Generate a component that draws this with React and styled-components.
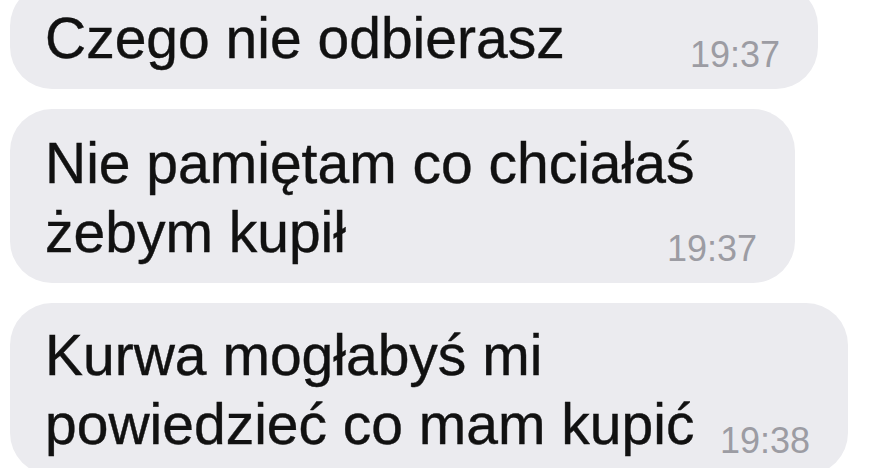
import React from "react";
import styled, { createGlobalStyle } from "styled-components";

const GlobalStyle = createGlobalStyle`
  html, body {
    margin: 0;
    padding: 0;
    background: #ffffff;
    overflow: hidden;
  }
`;

const Thread = styled.div`
  display: flex;
  flex-direction: column;
  align-items: flex-start;
  gap: 20px;
  margin-top: -16px;
  padding-left: 10px;
  font-family: "Liberation Sans", Arial, sans-serif;
`;

const Bubble = styled.div`
  box-sizing: border-box;
  width: ${(p) => p.width}px;
  padding: ${(p) => p.top}px 38px 16px 35px;
  background: #ebebef;
  border-radius: 42px;
  color: #111111;
`;

const Line = styled.div`
  font-size: 57px;
  line-height: 69px;
  white-space: nowrap;
  -webkit-text-stroke: 0.4px #111111;
`;

const LastLine = styled.div`
  display: flex;
  justify-content: space-between;
  align-items: flex-end;
`;

const Time = styled.span`
  font-size: 36px;
  line-height: 36px;
  color: #9c9ca3;
  white-space: nowrap;
`;

const messages = [
  { lines: ["Czego nie odbierasz"], time: "19:37", width: 808, top: 20 },
  {
    lines: ["Nie pamiętam co chciałaś", "żebym kupił"],
    time: "19:37",
    width: 785,
    top: 20,
  },
  {
    lines: ["Kurwa mogłabyś mi", "powiedzieć co mam kupić"],
    time: "19:38",
    width: 838,
    top: 18,
  },
];

export default function App() {
  return (
    <>
      <GlobalStyle />
      <Thread>
        {messages.map((m, i) => {
          const head = m.lines.slice(0, -1);
          const last = m.lines[m.lines.length - 1];
          return (
            <Bubble key={i} width={m.width} top={m.top}>
              {head.map((l) => (
                <Line key={l}>{l}</Line>
              ))}
              <LastLine>
                <Line>{last}</Line>
                <Time>{m.time}</Time>
              </LastLine>
            </Bubble>
          );
        })}
      </Thread>
    </>
  );
}
